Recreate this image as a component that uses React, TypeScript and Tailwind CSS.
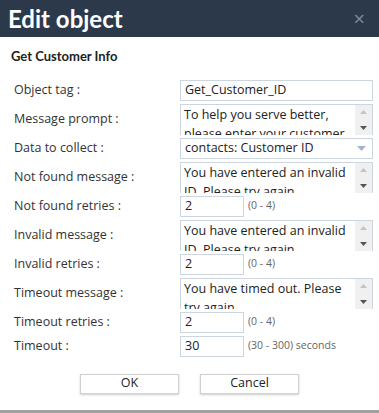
import React from 'react';

// --- Small form controls ---
const labelFont = { fontFamily: '"Open Sans", "Noto Sans", sans-serif' };

function TextInput({ value, narrow }: { value: string, narrow?: boolean }) {
    return (
        <div className={`h-[21px] border border-[#cdd6e0] bg-white px-[4px] flex items-center text-[12.5px] text-[#222] ${narrow ? 'w-[64px]' : 'w-full'}`}>
            {value}
        </div>
    );
}

function FakeTextarea({ text }: { text: string }) {
    return (
        <div className="h-[31px] w-full border-t border-l border-r border-[#cdd6e0] bg-white flex overflow-hidden">
            <div className="flex-1 min-w-0 px-[3px] text-[12.5px] leading-[19px] text-[#222] overflow-hidden">{text}</div>
            <div className="w-[17px] shrink-0 bg-[#f0f0f0] flex flex-col items-center justify-between py-[5px]">
                <svg width="7" height="4" viewBox="0 0 7 4"><path d="M0 4 L3.5 0 L7 4 Z" fill="#c4c4c4" /></svg>
                <svg width="7" height="4" viewBox="0 0 7 4"><path d="M0 0 L7 0 L3.5 4 Z" fill="#555" /></svg>
            </div>
        </div>
    );
}

function SelectBox({ value }: { value: string }) {
    return (
        <div className="h-[21px] w-full border border-[#cdd6e0] bg-white pl-[4px] pr-[6px] flex items-center justify-between text-[12.5px] text-[#222]">
            <span>{value}</span>
            <svg width="9" height="5" viewBox="0 0 9 5"><path d="M0 0 L9 0 L4.5 5 Z" fill="#a3b5c8" /></svg>
        </div>
    );
}

function Row({ label, children, tall }: { label: string, children: React.ReactNode, tall?: boolean }) {
    return (
        <div className={`grid grid-cols-[166px_1fr] items-center ${tall ? 'h-[31px]' : 'h-[21px]'}`}>
            <span className="text-[12.5px] text-[#333]">{label}</span>
            <div className="min-w-0">{children}</div>
        </div>
    );
}

function RetryInput({ value, hint }: { value: string, hint: string }) {
    return (
        <div className="flex items-center gap-[4px]">
            <TextInput value={value} narrow />
            <span className="text-[10.5px] text-[#666]">{hint}</span>
        </div>
    );
}

export default function App() {
    return (
        <div className="w-[379px] h-[413px] bg-[#a0a0a0]" style={labelFont}>
            <div className="h-[410px] bg-white flex flex-col">
                {/* header */}
                <div className="h-[37px] bg-[#2b394b] flex items-center justify-between pl-[8px] pr-[14px]">
                    <span className="text-white text-[24px] font-bold leading-none" style={{ fontFamily: 'Lato, sans-serif' }}>Edit object</span>
                    <span className="text-[#7f8c9b] text-[20px] leading-none">×</span>
                </div>

                <div className="pl-[11px] pt-[10px] text-[13px] font-bold text-[#222]" style={{ fontFamily: 'Lato, sans-serif' }}>Get Customer Info</div>

                <div className="flex flex-col gap-[3px] pl-[14px] pr-[6px] pt-[13px]">
                    <Row label="Object tag :"><TextInput value="Get_Customer_ID" /></Row>
                    <Row label="Message prompt :" tall><FakeTextarea text="To help you serve better, please enter your customer ID." /></Row>
                    <Row label="Data to collect :"><SelectBox value="contacts: Customer ID" /></Row>
                    <Row label="Not found message :" tall><FakeTextarea text="You have entered an invalid ID. Please try again." /></Row>
                    <Row label="Not found retries :"><RetryInput value="2" hint="(0 - 4)" /></Row>
                    <Row label="Invalid message :" tall><FakeTextarea text="You have entered an invalid ID. Please try again." /></Row>
                    <Row label="Invalid retries :"><RetryInput value="2" hint="(0 - 4)" /></Row>
                    <Row label="Timeout message :" tall><FakeTextarea text="You have timed out. Please try again." /></Row>
                    <Row label="Timeout retries :"><RetryInput value="2" hint="(0 - 4)" /></Row>
                    <Row label="Timeout :"><RetryInput value="30" hint="(30 - 300) seconds" /></Row>
                </div>

                <div className="flex justify-center gap-[21px] pt-[17px]">
                    <button className="w-[99px] h-[20px] bg-white border border-[#d0d0d0] shadow-[0_1px_2px_rgba(0,0,0,0.2)] text-[12.5px] text-[#222] leading-none">OK</button>
                    <button className="w-[99px] h-[20px] bg-white border border-[#d0d0d0] shadow-[0_1px_2px_rgba(0,0,0,0.2)] text-[12.5px] text-[#222] leading-none">Cancel</button>
                </div>
            </div>
        </div>
    );
}
